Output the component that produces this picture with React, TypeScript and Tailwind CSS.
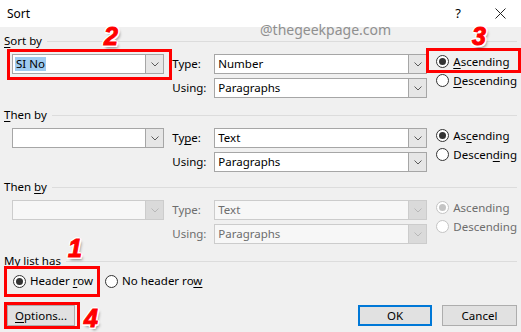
import type { ReactNode } from 'react';

function Chevron({ disabled }: { disabled?: boolean }) {
  return (
    <svg width="8" height="5" viewBox="0 0 8 5">
      <polyline points="0.5,0.5 4,4 7.5,0.5" fill="none" stroke={disabled ? '#b8b8b8' : '#5a5a5a'} strokeWidth="1" />
    </svg>
  );
}

function Combo({ value, wide, disabled, selected }: { value?: string; wide?: boolean; disabled?: boolean; selected?: boolean }) {
  return (
    <div
      className={`flex h-[20px] border ${wide ? 'w-[213px]' : 'w-[154px]'} ${
        disabled ? 'border-[#cccccc] bg-[#f7f7f7]' : 'border-[#a6a6a6] bg-white'
      }`}
    >
      <div className="flex flex-1 items-center pl-[2px]">
        {value && (
          <span
            className={`px-px leading-[14px] ${selected ? 'bg-[#9ecbf0]' : ''} ${disabled ? 'text-[#6d6d6d]' : ''}`}
          >
            {value}
          </span>
        )}
      </div>
      <div
        className={`flex w-[18px] items-center justify-center border-l ${
          disabled ? 'border-[#cccccc] bg-[#dadada]' : 'border-[#a6a6a6] bg-[#e6e6e6]'
        }`}
      >
        <Chevron disabled={disabled} />
      </div>
    </div>
  );
}

function Radio({ checked, disabled, children }: { checked?: boolean; disabled?: boolean; children: ReactNode }) {
  return (
    <div className="flex h-[19px] items-center gap-[4px]">
      <span
        className={`flex h-[13px] w-[13px] items-center justify-center rounded-full border bg-white ${
          disabled ? 'border-[#c4c4c4]' : 'border-[#333333]'
        }`}
      >
        {checked && <span className={`h-[7px] w-[7px] rounded-full ${disabled ? 'bg-[#c4c4c4]' : 'bg-[#333333]'}`} />}
      </span>
      <span className={disabled ? 'text-[#6d6d6d]' : ''}>{children}</span>
    </div>
  );
}

function U({ children }: { children: ReactNode }) {
  return <span className="underline decoration-1 underline-offset-2">{children}</span>;
}

function Header({ children }: { children: ReactNode }) {
  return (
    <div className="flex h-[14px] items-center">
      <span>{children}</span>
      <div className="ml-[5px] h-px flex-1 bg-[#dcdcdc]" />
    </div>
  );
}

function Section({
  label,
  typeLabel,
  type,
  value,
  selected,
  disabled,
  asc,
  desc,
  className,
}: {
  label: ReactNode;
  typeLabel: ReactNode;
  type: string;
  value?: string;
  selected?: boolean;
  disabled?: boolean;
  asc: ReactNode;
  desc: ReactNode;
  className?: string;
}) {
  const lbl = disabled ? 'w-[42px] text-[#6d6d6d]' : 'w-[42px]';
  return (
    <div className={className}>
      <Header>{label}</Header>
      <div className="mt-[6px] flex pl-[8px]">
        <Combo value={value} selected={selected} disabled={disabled} />
        <div className="ml-[8px] flex flex-col gap-[4px]">
          <div className="flex items-center">
            <span className={lbl}>{typeLabel}</span>
            <Combo value={type} wide disabled={disabled} />
          </div>
          <div className="flex items-center">
            <span className={lbl}>Using:</span>
            <Combo value="Paragraphs" wide disabled={disabled} />
          </div>
        </div>
        <div className="-mt-[2px] ml-[9px] flex flex-col">
          <Radio checked disabled={disabled}>{asc}</Radio>
          <Radio disabled={disabled}>{desc}</Radio>
        </div>
      </div>
    </div>
  );
}

function Num({ children, className }: { children: ReactNode; className: string }) {
  return (
    <span
      className={`absolute font-['Liberation_Sans',Arial,sans-serif] text-[25px] font-bold italic leading-none text-[#ff0000] [-webkit-text-stroke:1px_#ff0000] [text-shadow:-2px_0_0_#fff,2px_0_0_#fff,0_-2px_0_#fff,0_2px_0_#fff,-1.5px_-1.5px_0_#fff,1.5px_-1.5px_0_#fff,-1.5px_1.5px_0_#fff,1.5px_1.5px_0_#fff,2px_3px_3px_rgba(0,0,0,0.45)] ${className}`}
    >
      {children}
    </span>
  );
}

export default function App() {
  return (
    <div className="relative h-[332px] w-[521px] overflow-hidden bg-[#f0f0f0] font-['Noto_Sans',sans-serif] text-[11.5px] text-black">
      <div className="flex h-[27px] items-center justify-between bg-white pl-[7px] pr-[15px]">
        <span className="text-[12px]">Sort</span>
        <div className="flex items-center gap-[34px]">
          <span className="text-[13px]">?</span>
          <svg width="11" height="11" viewBox="0 0 11 11">
            <path d="M0.5 0.5 L10.5 10.5 M10.5 0.5 L0.5 10.5" stroke="#222" strokeWidth="1" />
          </svg>
        </div>
      </div>

      <div className="px-[4px] pt-[7px]">
        <Section
          className="mb-[10px]"
          label={<><U>S</U>ort by</>}
          typeLabel="Type:"
          type="Number"
          value="SI No"
          selected
          asc={<><U>A</U>scending</>}
          desc={<><U>D</U>escending</>}
        />
        <Section
          className="mb-[8px]"
          label={<><U>T</U>hen by</>}
          typeLabel={<>Ty<U>p</U>e:</>}
          type="Text"
          asc={<>As<U>c</U>ending</>}
          desc={<>Descen<U>d</U>ing</>}
        />
        <Section
          label={<>Then <U>b</U>y</>}
          typeLabel="Type:"
          type="Text"
          disabled
          asc="Ascending"
          desc="Descending"
        />

        <div className="mt-[10px]">
          <Header>My list has</Header>
          <div className="mt-[3px] flex h-[20px] items-center pl-[9px]">
            <Radio checked>Header <U>r</U>ow</Radio>
            <div className="ml-[12px]">
              <Radio>No header ro<U>w</U></Radio>
            </div>
          </div>
        </div>

        <div className="mt-[14px] flex items-center justify-between">
          <button className="ml-[3px] flex h-[21px] w-[68px] items-center justify-center border border-[#adadad] bg-[#e1e1e1]">
            <span><U>O</U>ptions...</span>
          </button>
          <div className="flex gap-[10px]">
            <button className="flex h-[21px] w-[74px] items-center justify-center border-2 border-[#0078d7] bg-[#e1e1e1]">
              OK
            </button>
            <button className="flex h-[21px] w-[75px] items-center justify-center border border-[#adadad] bg-[#e1e1e1]">
              Cancel
            </button>
          </div>
        </div>
      </div>

      <span className="absolute left-[260px] top-[23px] text-[14px] leading-none text-[#8f8f8f]">@thegeekpage.com</span>

      <div className="absolute left-[7px] top-[49px] h-[31px] w-[165px] border-[3px] border-[#ff0000]" />
      <div className="absolute left-[426px] top-[48px] h-[25px] w-[95px] border-[3px] border-[#ff0000]" />
      <div className="absolute left-[4px] top-[266px] h-[31px] w-[96px] border-[3px] border-[#ff0000]" />
      <div className="absolute left-[4px] top-[302px] h-[27px] w-[76px] border-[3px] border-[#ff0000]" />

      <Num className="left-[104px] top-[24px]">2</Num>
      <Num className="left-[472px] top-[24px]">3</Num>
      <Num className="left-[68px] top-[236px]">1</Num>
      <Num className="left-[84px] top-[306px]">4</Num>
    </div>
  );
}
